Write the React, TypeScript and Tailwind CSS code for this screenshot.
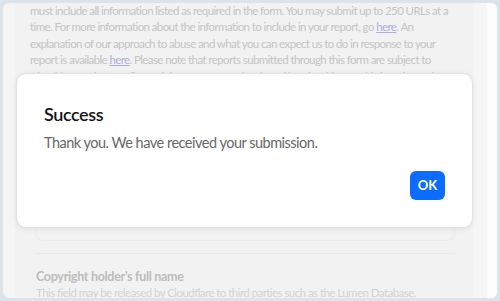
import React from 'react'

const lines = [
  <>must include all information listed as required in the form. You may submit up to 250 URLs at a</>,
  <>
    time. For more information about the information to include in your report, go{' '}
    <a className="text-[#a9b0de] underline">here</a>. An
  </>,
  <>explanation of our approach to abuse and what you can expect us to do in response to your</>,
  <>
    report is available <a className="text-[#a9b0de] underline">here</a>. Please note that reports submitted through this form are subject to
  </>,
  <>Cloudflare's privacy policy and that reports may be shared by Cloudflare to third parties and</>,
]

export default function App() {
  return (
    <div
      className="relative h-[301px] w-[500px] overflow-hidden bg-[#dbe3eb] p-[3px]"
      style={{ fontFamily: 'Lato, "Noto Sans", sans-serif' }}
    >
      <div className="flex h-[295px] overflow-hidden rounded-md bg-[#f5f5f6]">
        <div className="w-[12px] shrink-0" />
        <main className="min-w-0 flex-1 bg-[#f2f2f2] pl-[15px] pr-[18px]">
          <div className="text-[11.5px] leading-[16.4px] tracking-[-0.6px] text-[#c4c4c4]">
            {lines.map((l, i) => (
              <div key={i} className="whitespace-nowrap">{l}</div>
            ))}
          </div>
          <div className="ml-[5px] mt-[14px] h-[142px] rounded-b-lg border border-t-0 border-[#ebebeb]" />
          <div className="ml-[5px] mt-[12px] h-px bg-[#e9e9e9]" />
          <div className="ml-[6px] mt-[14px] text-[12.5px] font-bold leading-[17px] tracking-[-0.3px] text-[#bcbcbc]">
            Copyright holder's full name
          </div>
          <div className="ml-[6px] whitespace-nowrap text-[11.5px] leading-[16px] tracking-[-0.55px] text-[#d2d2d2]">
            This field may be released by Cloudflare to third parties such as the Lumen Database.
          </div>
        </main>
        <div className="w-[14px] shrink-0 bg-[#f6f6f6]" />
        <div className="w-[10px] shrink-0 bg-[#fdfdfd]" />
      </div>

      <div className="absolute left-[16px] top-[73px] h-[155px] w-[457px] rounded-[10px] border border-[#e2e2e2] bg-white px-[27px] pt-[29px] shadow-[0_1px_6px_rgba(0,0,0,0.08)]">
        <h2 className="text-[18px] font-semibold leading-[22px] tracking-[-0.4px] text-[#151515]">Success</h2>
        <p className="mt-[8px] text-[14.5px] leading-[20px] tracking-[-0.5px] text-[#676767]">Thank you. We have received your submission.</p>
        <div className="mt-[18px] flex justify-end">
          <button className="h-[29px] w-[35px] rounded-[6px] bg-[#0b6cff] text-[13px] font-bold text-white">OK</button>
        </div>
      </div>
    </div>
  )
}
